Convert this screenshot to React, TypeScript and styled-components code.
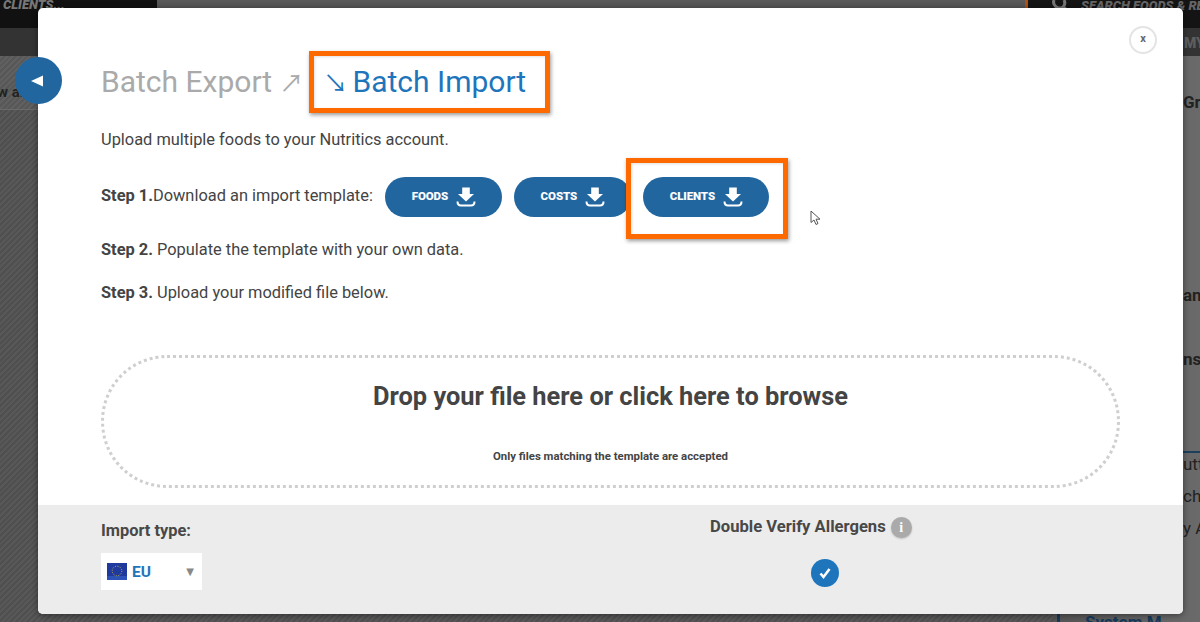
import React from "react";
import styled, { createGlobalStyle } from "styled-components";

const Global = createGlobalStyle`
  html, body { margin: 0; padding: 0; background: #4d4d4d; }
  body { font-family: Roboto, "Liberation Sans", sans-serif; color: #444; }
  * { box-sizing: border-box; }
`;

const stripes = `repeating-linear-gradient(135deg, rgba(255,255,255,.035) 0 2px, rgba(0,0,0,.035) 2px 4px)`;

const Page = styled.div`
  position: relative; width: 1200px; height: 622px; overflow: hidden;
  background-color: #525252; background-image: ${stripes};
`;
const TopBar = styled.div`
  display: flex; height: 28px; background: #555;
`;
const TopLeft = styled.div`
  width: 157px; background: #111; color: #777; font: italic 900 13px/10px Roboto, sans-serif;
  padding-left: 3px; overflow: hidden;
`;
const TopSpacer = styled.div`flex: 1; background: linear-gradient(#5a5a5a, #4c4c4c);`;
const SearchBar = styled.div`
  width: 175px; border-left: 3px solid #b3500f; background: #141414; color: #666;
  display: flex; gap: 13px; padding-left: 24px;
  font: italic 900 13px/11px Roboto, sans-serif; white-space: nowrap; overflow: hidden;
`;
const SearchIcon = styled.svg`flex: none;`;
const NavBar = styled.div`
  display: flex; justify-content: flex-end; height: 28px; background: #333;
  color: #5e5e5e; font: 900 14px/30px Roboto, sans-serif;
`;
const NavLabel = styled.span`width: 16px; overflow: hidden; white-space: nowrap;`;
const Body = styled.div`display: flex; justify-content: space-between; height: 566px;`;
const LeftCol = styled.div`width: 60px;`;
const LeftRow = styled.div`
  height: 54px; background: rgba(255,255,255,.05); border-bottom: 1px solid #6a6a6a;
  font: 700 15px/72px Roboto, sans-serif; color: #222; white-space: nowrap; margin-left: -3px;
`;
const RightCol = styled.div`
  width: 145px; position: relative; background: linear-gradient(90deg, #555, #6a6a6a);
  display: flex; flex-direction: column; overflow: hidden;
`;
const RightRow = styled.div<{ $h: number; $bold?: boolean; $line?: boolean }>`
  height: ${(p) => p.$h}px; padding-left: 128px; white-space: nowrap; color: #222;
  font: ${(p) => (p.$bold ? 700 : 400)} 17px/20px Roboto, sans-serif;
  display: flex; align-items: flex-end;
  border-top: ${(p) => (p.$line ? "2px solid #1d3f5e" : "none")};
`;
const SystemRow = styled.div`
  margin-top: 74px; height: 10px; margin-left: 2px; border-left: 3px solid #17395a;
  padding-left: 25px; color: #17395a; font: 700 17px/20px Roboto, sans-serif; white-space: nowrap;
`;

const Modal = styled.div`
  position: absolute; left: 38px; top: 8px; width: 1145px; height: 605.5px;
  background: #fff; border-radius: 5px; box-shadow: 0 1px 6px rgba(0,0,0,.45);
  display: flex; flex-direction: column;
`;
const Main = styled.div`
  flex: 1; padding: 56px 0 0 63px;
`;
const Titles = styled.div`
  display: flex; align-items: center; height: 36px; font-size: 30px; line-height: 36px; white-space: nowrap;
`;
const Title = styled.span<{ $active?: boolean }>`
  color: ${(p) => (p.$active ? "#1f75bc" : "#aaa")};
  margin-left: ${(p) => (p.$active ? "20px" : "0")};
`;
const TitleWords = styled.span`margin-left: 5px;`;
const Arrow = styled.span`
  font-family: "Noto Sans CJK JP", "DejaVu Sans", sans-serif; font-weight: 400; font-size: 24px; line-height: 1;
`;
const Text = styled.div`font-size: 16.4px; line-height: 24px; color: #444;`;
const Intro = styled(Text)`margin-top: 28px;`;
const StepRow = styled.div`
  display: flex; align-items: flex-start; margin-top: 25px; height: 40px;
`;
const StepText = styled(Text)`padding-top: 7px; margin-right: 12px;`;
const Step = styled(Text)<{ $gap: number }>`margin-top: ${(p) => p.$gap}px;`;
const PillRow = styled.div`display: flex; gap: 12px;`;
const Pill = styled.button<{ $w: number }>`
  width: ${(p) => p.$w}px; height: 40px; border: 0; border-radius: 20px; background: #22669f; color: #fff;
  display: flex; align-items: center; justify-content: center; gap: 8px; padding: 0 0 1px 1px;
  font: 900 11.5px/1 Roboto, sans-serif; letter-spacing: -.1px;
`;
const Drop = styled.div`
  margin-top: 50px; width: 1019px; height: 133px; border: 3px dotted #cfcfcf; border-radius: 66px;
  display: flex; flex-direction: column; align-items: center; padding-top: 22px;
`;
const DropTitle = styled.div`font-size: 25.4px; line-height: 32px; font-weight: 700; color: #444;`;
const DropNote = styled.div`margin-top: 37px; font-size: 11.4px; line-height: 14px; font-weight: 700; color: #444;`;

const Footer = styled.div`
  height: 108.5px; flex: none; background: #ececec; border-radius: 0 0 5px 5px;
  display: flex; padding: 14px 0 0 63px;
`;
const ImportCol = styled.div`width: 609px;`;
const Label = styled.div`font-size: 16.4px; line-height: 24px; font-weight: 700; color: #484848;`;
const VerifyLabel = styled(Label)`font-size: 16.6px;`;
const Select = styled.div`
  margin-top: 10px; width: 101px; height: 37px; background: #fff; display: flex; align-items: center;
  padding: 0 8px 0 6px; color: #1f75bc; font-size: 15.5px; font-weight: 700;
`;
const SelectText = styled.span`flex: 1; margin-left: 5px;`;
const Caret = styled.span`color: #888; font: 10px "DejaVu Sans", sans-serif;`;
const VerifyHead = styled.div`display: flex; align-items: center; gap: 5px; margin-top: -4px;`;
const Info = styled.span`
  width: 21px; height: 21px; border-radius: 50%; background: #aaa; color: #fff; font: 700 14px/21px "Liberation Serif", serif;
  text-align: center; box-shadow: 0 1px 2px rgba(0,0,0,.2);
`;
const Check = styled.span`
  margin: 20px 0 0 101px; width: 28px; height: 28px; border-radius: 50%; background: #1f75bc;
  display: flex; align-items: center; justify-content: center;
`;
const Back = styled.button`
  position: absolute; left: 15px; top: 57px; width: 47px; height: 47px; border: 0; border-radius: 50%;
  background: #22669f; display: flex; align-items: center; justify-content: center; padding: 0 3px 0 0;
`;
const Close = styled.button`
  position: absolute; right: 26px; top: 18px; width: 28px; height: 28px; border-radius: 50%;
  border: 2px solid #e4e4e4; background: #fff; color: #666; font: 700 11px/20px Roboto, sans-serif; padding: 0 0 2px;
`;
const Callout = styled.div<{ $l: number; $t: number; $w: number; $h: number }>`
  position: absolute; left: ${(p) => p.$l}px; top: ${(p) => p.$t}px; width: ${(p) => p.$w}px; height: ${(p) => p.$h}px;
  border: 5px solid #ff6a00; box-shadow: 1px 2px 4px rgba(0,0,0,.4), inset 1px 1px 3px rgba(0,0,0,.12);
  pointer-events: none;
`;
const Cursor = styled.svg`position: absolute; left: 810px; top: 210px;`;

const DownloadIcon = () => (
  <svg width="20" height="20" viewBox="0 0 20 20">
    <path d="M6.200 0.500h7.600v6.500h4.200L10 14.500 2 7h4.200z" fill="#fff" />
    <path d="M1.500 14.500c0 3 1.500 4 3.500 4h10c2 0 3.500-1 3.500-4" fill="none" stroke="#fff" strokeWidth="2" />
  </svg>
);

const Flag = () => (
  <svg width="20" height="17" viewBox="0 0 20 17">
    <rect width="20" height="17" fill="#1f3a9c" />
    <rect y="13" width="20" height="4" fill="#2d52b8" />
    <circle cx="10" cy="8" r="4.800" fill="none" stroke="#c9b84a" strokeWidth="1" strokeDasharray="1 1.500" />
  </svg>
);

const data = [
  { label: "FOODS", w: 117 },
  { label: "COSTS", w: 117 },
  { label: "CLIENTS", w: 126 },
];

export default function App() {
  return (
    <Page>
      <Global />
      <TopBar>
        <TopLeft>CLIENTS...</TopLeft>
        <TopSpacer />
        <SearchBar>
          <SearchIcon width="16" height="10" viewBox="0 0 16 10"><path d="M2 0a6 6 0 0 0 9 7l4 3M12 0a6 6 0 0 1-1 7" fill="none" stroke="#777" strokeWidth="3" /></SearchIcon>
          SEARCH FOODS &amp; RECIPES
        </SearchBar>
      </TopBar>
      <NavBar><NavLabel>MY</NavLabel></NavBar>
      <Body>
        <LeftCol><LeftRow>w all</LeftRow></LeftCol>
        <RightCol>
          <RightRow $h={56} $bold>Groups</RightRow>
          <RightRow $h={194} $bold>and</RightRow>
          <RightRow $h={64} $bold>ns</RightRow>
          <RightRow $h={83} />
          <RightRow $h={23} $line>utton</RightRow>
          <RightRow $h={32}>ch</RightRow>
          <RightRow $h={32}>y A</RightRow>
          <SystemRow>System M</SystemRow>
        </RightCol>
      </Body>

      <Modal>
        <Main>
          <Titles>
            <Title>Batch Export <Arrow>↗</Arrow></Title>
            <Title $active><Arrow>↘</Arrow><TitleWords>Batch Import</TitleWords></Title>
          </Titles>
          <Intro>Upload multiple foods to your Nutritics account.</Intro>
          <StepRow>
            <StepText><b>Step 1.</b>Download an import template:</StepText>
            <PillRow>
              {data.map((d) => (
                <Pill key={d.label} $w={d.w}>{d.label}<DownloadIcon /></Pill>
              ))}
            </PillRow>
          </StepRow>
          <Step $gap={21}><b>Step 2.</b> Populate the template with your own data.</Step>
          <Step $gap={19}><b>Step 3.</b> Upload your modified file below.</Step>
          <Drop>
            <DropTitle>Drop your file here or click here to browse</DropTitle>
            <DropNote>Only files matching the template are accepted</DropNote>
          </Drop>
        </Main>
        <Footer>
          <ImportCol>
            <Label>Import type:</Label>
            <Select><Flag /><SelectText>EU</SelectText><Caret>▼</Caret></Select>
          </ImportCol>
          <div>
            <VerifyHead><VerifyLabel>Double Verify Allergens</VerifyLabel><Info>i</Info></VerifyHead>
            <Check>
              <svg width="14" height="14" viewBox="0 0 14 14"><path d="M2.500 7.500l3 3.500L11.500 3" fill="none" stroke="#fff" strokeWidth="2.600" /></svg>
            </Check>
          </div>
        </Footer>
        <Close>x</Close>
      </Modal>

      <Back>
        <svg width="13" height="12" viewBox="0 0 13 12"><path d="M0 6L12 0.500V11.500z" fill="#fff" /></svg>
      </Back>
      <Callout $l={309} $t={51} $w={241} $h={62} />
      <Callout $l={626} $t={158} $w={162} $h={81} />
      <Cursor width="11" height="16" viewBox="0 0 11 16">
        <path d="M1 1v11.500l3-2.500 2 4.500 2-1-2-4.300h4z" fill="#fff" stroke="#555" strokeWidth="1" />
      </Cursor>
    </Page>
  );
}
